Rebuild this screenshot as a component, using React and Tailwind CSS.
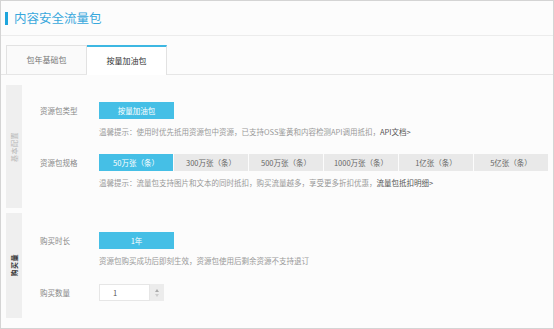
import React from "react";

const font = { fontFamily: '"Noto Sans CJK SC", "Noto Sans", sans-serif' };

const sizes = ["50万张（条）", "300万张（条）", "500万张（条）", "1000万张（条）", "1亿张（条）", "5亿张（条）"];

const SideLabel = ({ text, dark }) => (
	<div className="w-[16px] shrink-0 bg-[#efefef] flex items-center justify-center">
		<span
			className={`[writing-mode:vertical-rl] [text-orientation:sideways] rotate-180 text-[7px] leading-none tracking-[0.5px] ${
				dark ? "text-[#333] font-bold" : "text-[#b5b5b5]"
			}`}
		>
			{text}
		</span>
	</div>
);

const Label = ({ children }) => (
	<div className="w-[59px] shrink-0 text-[7.5px] text-[#888] leading-none">{children}</div>
);

const Hint = ({ children }) => (
	<div className="pl-[59px] text-[7.5px] leading-[10px] text-[#999] whitespace-nowrap">{children}</div>
);

export default function App() {
	return (
		<div className="w-[554px] h-[329px] border border-[#d4d4d4] bg-[#fcfcfc] overflow-hidden" style={font}>
			{/* Title */}
			<div className="h-[35px] flex items-center pl-[4px] border-b border-[#ececec]">
				<div className="w-[3px] h-[13px] bg-[#1ea5dc]" />
				<div className="ml-[6px] text-[12.5px] text-[#38a8dc] leading-none">内容安全流量包</div>
			</div>

			{/* Tabs */}
			<div className="mt-[9px] pl-[5px] flex border-b border-[#e6e6e6] h-[30px]">
				<div className="w-[81px] border border-b-0 border-[#e2e2e2] bg-[#fafafa] flex items-center justify-center text-[8px] text-[#777]">
					包年基础包
				</div>
				<div className="w-[80px] border-t-[2px] border-r border-t-[#3db7e2] border-r-[#e2e2e2] bg-white flex items-center justify-center text-[8px] text-[#333] -mb-px">
					按量加油包
				</div>
			</div>

			{/* Section 1 */}
			<div className="mt-[10px] ml-[5px] flex h-[123px]">
				<SideLabel text="基本配置" />
				<div className="pl-[18px] pt-[17px] flex flex-col">
					<div className="flex items-center h-[17px]">
						<Label>资源包类型</Label>
						<div className="w-[75px] h-[17px] bg-[#45bfe6] text-white text-[7.5px] flex items-center justify-center">
							按量加油包
						</div>
					</div>
					<div className="mt-[8px]">
						<Hint>
							温馨提示：使用时优先抵用资源包中资源，已支持OSS鉴黄和内容检测API调用抵扣，
							<span className="text-[#555]">API文档&gt;</span>
						</Hint>
					</div>
					<div className="mt-[17px] flex items-center h-[17px]">
						<Label>资源包规格</Label>
						<div className="flex gap-px">
							{sizes.map((s, i) => (
								<div
									key={s}
									className={`w-[74px] h-[17px] flex items-center justify-center text-[7.5px] ${
										i === 0 ? "bg-[#45bfe6] text-white" : "bg-[#e9e9e9] text-[#666]"
									}`}
								>
									{s}
								</div>
							))}
						</div>
					</div>
					<div className="mt-[7px]">
						<Hint>
							温馨提示：流量包支持图片和文本的同时抵扣，购买流量越多，享受更多折扣优惠，
							<span className="text-[#555]">流量包抵扣明细&gt;</span>
						</Hint>
					</div>
				</div>
			</div>

			{/* Section 2 */}
			<div className="mt-[5px] ml-[5px] flex h-[105px]">
				<SideLabel text="购买量" dark />
				<div className="pl-[18px] pt-[19px] flex flex-col">
					<div className="flex items-center h-[17px]">
						<Label>购买时长</Label>
						<div className="w-[75px] h-[17px] bg-[#45bfe6] text-white text-[7.5px] flex items-center justify-center">
							1年
						</div>
					</div>
					<div className="mt-[7px]">
						<Hint>资源包购买成功后即刻生效，资源包使用后剩余资源不支持退订</Hint>
					</div>
					<div className="mt-[18px] flex items-center h-[17px]">
						<Label>购买数量</Label>
						<div className="flex h-[17px]">
							<div className="w-[51px] border border-[#e6e6e6] bg-white flex items-center pl-[13px] text-[7.5px] text-[#555]">
								1
							</div>
							<div className="w-[14px] bg-[#ececec] flex flex-col items-center justify-center gap-[2px]">
								<div className="w-0 h-0 border-l-[2.5px] border-r-[2.5px] border-b-[3px] border-l-transparent border-r-transparent border-b-[#aaa]" />
								<div className="w-0 h-0 border-l-[2.5px] border-r-[2.5px] border-t-[3px] border-l-transparent border-r-transparent border-t-[#ccc]" />
							</div>
						</div>
					</div>
				</div>
			</div>
		</div>
	);
}
